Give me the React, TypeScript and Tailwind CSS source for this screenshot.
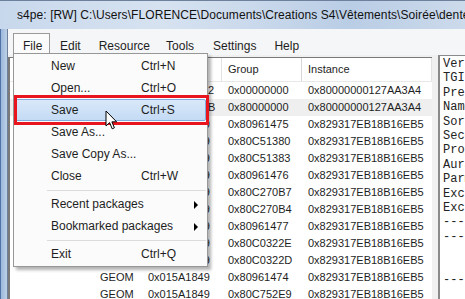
const rows = [
  { tag: 'CASP', type: '0x034AEEC2', group: '0x00000000', inst: '0x80000000127AA3A4' },
  { tag: 'CASP', type: '0x034AEECB', group: '0x80000000', inst: '0x80000000127AA3A4', sel: true },
  { tag: 'GEOM', type: '0x015A1849', group: '0x80961475', inst: '0x829317EB18B16EB5' },
  { tag: 'GEOM', type: '0x015A1849', group: '0x80C51380', inst: '0x829317EB18B16EB5' },
  { tag: 'GEOM', type: '0x015A1849', group: '0x80C51383', inst: '0x829317EB18B16EB5' },
  { tag: 'GEOM', type: '0x015A1849', group: '0x80961476', inst: '0x829317EB18B16EB5' },
  { tag: 'GEOM', type: '0x015A1849', group: '0x80C270B7', inst: '0x829317EB18B16EB5' },
  { tag: 'GEOM', type: '0x015A1849', group: '0x80C270B4', inst: '0x829317EB18B16EB5' },
  { tag: 'GEOM', type: '0x015A1849', group: '0x80961477', inst: '0x829317EB18B16EB5' },
  { tag: 'GEOM', type: '0x015A1849', group: '0x80C0322E', inst: '0x829317EB18B16EB5' },
  { tag: 'GEOM', type: '0x015A1849', group: '0x80C0322D', inst: '0x829317EB18B16EB5' },
  { tag: 'GEOM', type: '0x015A1849', group: '0x80961474', inst: '0x829317EB18B16EB5' },
  { tag: 'GEOM', type: '0x015A1849', group: '0x80C752E9', inst: '0x829317EB18B16EB5' },
]

const details = [
  'Version: 0x0000002B',
  'TGI offset: 0x000003A8',
  'PresetCount: 0x00000000',
  'Name: yfBody_EP01Dress',
  'SortPriority: 0',
  'SecondarySortIndex: 0x0000',
  'PropertyID: 0x00000000',
  'AuralMaterialsVersion: 0',
  'ParmFlags: 0x3C',
  'ExcludePartFlags: 0x0000',
  'ExcludeModifierRegionFlags: 0',
  '--- Tag ---',
  '--- Tag ---',
  '',
  '',
  '--- Tag ---',
  '',
]

type Item = { label?: string; keys?: string; sub?: boolean; sep?: boolean; hot?: boolean }

const fileMenu: Item[] = [
  { label: 'New', keys: 'Ctrl+N' },
  { label: 'Open...', keys: 'Ctrl+O' },
  { label: 'Save', keys: 'Ctrl+S', hot: true },
  { label: 'Save As...' },
  { label: 'Save Copy As...' },
  { label: 'Close', keys: 'Ctrl+W' },
  { sep: true },
  { label: 'Recent packages', sub: true },
  { label: 'Bookmarked packages', sub: true },
  { sep: true },
  { label: 'Exit', keys: 'Ctrl+Q' },
]

const AppIcon = () => (
  <svg width="14" height="15" viewBox="0 0 14 15">
    <defs>
      <radialGradient id="g" cx="40%" cy="35%" r="70%">
        <stop offset="0%" stopColor="#d8f07a" />
        <stop offset="55%" stopColor="#58b02a" />
        <stop offset="100%" stopColor="#1f6a18" />
      </radialGradient>
    </defs>
    <ellipse cx="7" cy="7.5" rx="6.3" ry="7" fill="url(#g)" stroke="#2c5e1e" strokeWidth="0.8" />
    <path d="M7 2.2 L9.2 7.5 L7 12.8 L4.8 7.5 Z" fill="#f4f7c8" opacity="0.85" />
  </svg>
)

const Cursor = () => (
  <svg width="13" height="21" viewBox="0 0 13 21" className="absolute left-[105px] top-[110px]">
    <path d="M1 1 L1 16 L4.6 12.6 L7.2 18.8 L9.4 17.8 L6.9 11.8 L11.6 11.8 Z" fill="#fff" stroke="#000" strokeWidth="1" strokeLinejoin="round" />
  </svg>
)

export default function App() {
  return (
    <div className="relative w-[465px] h-[299px] overflow-hidden flex flex-col bg-[#f0f0f0] font-['Liberation_Sans',Arial,sans-serif] text-[#1e1e1e]">
      {/* title bar */}
      <div className="h-[29px] shrink-0 flex items-center gap-[9px] pl-[8px] border-t border-[#6d819c] bg-[linear-gradient(90deg,#c8d8ec_0%,#d6e2f0_35%,#c6d6ea_60%,#b9cde5_75%,#ccdaeb_100%)]">
        <AppIcon />
        <span className="text-[12px] tracking-[0.08px] whitespace-nowrap text-[#111]">
          s4pe: [RW] C:\Users\FLORENCE\Documents\Creations S4\Vêtements\Soirée\dentelle
        </span>
      </div>

      <div className="flex flex-1 min-h-0">
        {/* left frame */}
        <div className="w-[8px] shrink-0 border-l border-[#4f73a6] border-r border-r-[#6c7f99] bg-[linear-gradient(90deg,#9cb7dc,#bcd0e8)]" />

        <div className="flex-1 flex flex-col min-w-0">
          {/* menu bar */}
          <div className="h-[26px] shrink-0 flex items-end bg-[#f5f6f7] text-[12px]">
            <div className="h-[22px] w-[37px] ml-[5px] pl-[9px] pt-[3px] bg-[#fbfbfb] border border-b-0 border-[#9a9a9a]">File</div>
            <div className="h-[22px] pt-[4px] ml-[10px]">Edit</div>
            <div className="h-[22px] pt-[4px] ml-[18px]">Resource</div>
            <div className="h-[22px] pt-[4px] ml-[16px]">Tools</div>
            <div className="h-[22px] pt-[4px] ml-[19px]">Settings</div>
            <div className="h-[22px] pt-[4px] ml-[18px]">Help</div>
          </div>

          {/* body */}
          <div className="flex flex-1 min-h-0">
            {/* list */}
            <div className="w-[424px] mt-[2px] bg-white border-l-2 border-t border-[#7a7a7a] text-[11px] overflow-hidden">
              <div className="h-[24px] flex items-center border-b border-[#e8e8e8]">
                <div className="w-[85px] h-full border-r border-[#e3e3e3] pl-[5px] flex items-center">Name</div>
                <div className="w-[48px] h-full border-r border-[#e3e3e3] pl-[5px] flex items-center">Tag</div>
                <div className="w-[79px] h-full border-r border-[#e3e3e3] pl-[5px] flex items-center">Type</div>
                <div className="w-[80px] h-full border-r border-[#d6d6d6] pl-[6px] flex items-center">Group</div>
                <div className="flex-1 h-full border-r border-[#e3e3e3] pl-[6px] flex items-center">Instance</div>
              </div>
              {rows.map((r, i) => (
                <div key={i} className={`h-[17px] flex items-center whitespace-nowrap ${r.sel ? 'bg-[#efefef]' : ''}`}>
                  <div className="w-[85px] pl-[5px]" />
                  <div className="w-[48px] pl-[5px]">{r.tag}</div>
                  <div className="w-[79px] pl-[5px]">{r.type}</div>
                  <div className="w-[80px] pl-[6px]">{r.group}</div>
                  <div className="flex-1 pl-[6px]">{r.inst}</div>
                </div>
              ))}
            </div>

            {/* splitter */}
            <div className="w-[6px] shrink-0" />

            {/* detail panel */}
            <div className="flex-1 min-w-0 bg-white border-l-2 border-t border-[#8a8a8a] pl-[3px] pt-[1px] overflow-hidden font-['Liberation_Mono','Courier_New',monospace] text-[12px] leading-[14.4px] text-[#222]">
              {details.map((d, i) => (
                <div key={i} className="h-[14.4px] whitespace-nowrap">{d}</div>
              ))}
            </div>
          </div>
        </div>
      </div>

      {/* File dropdown */}
      <div className="absolute left-[13px] top-[53px] w-[195px] pt-[1px] pb-[1px] bg-[#fbfbfb] border border-[#979797] shadow-[3px_3px_3px_rgba(0,0,0,0.3)] text-[12px]">
        {fileMenu.map((it, i) =>
          it.sep ? (
            <div key={i} className="h-[6px] flex items-center pl-[33px] pr-[1px]">
              <div className="h-px w-full bg-[#dcdcdc]" />
            </div>
          ) : (
            <div
              key={i}
              className={`relative h-[22px] mx-[1px] flex items-center ${it.hot ? 'bg-[linear-gradient(#d9e8f9,#c4dbf5)] border border-[#80abdf] rounded-[2px]' : 'border border-transparent'}`}
            >
              <span className="w-[90px] pl-[35px] box-content whitespace-nowrap">{it.label}</span>
              {it.keys && <span className="whitespace-nowrap">{it.keys}</span>}
              {it.sub && (
                <span className="absolute left-[178px] top-[7px] w-0 h-0 border-y-[4px] border-y-transparent border-l-[4px] border-l-black" />
              )}
            </div>
          ),
        )}
      </div>

      {/* red annotation box */}
      <div className="absolute left-[14px] top-[95px] w-[195px] h-[30px] border-[3px] border-[#e8141e]" />

      <Cursor />
    </div>
  )
}
